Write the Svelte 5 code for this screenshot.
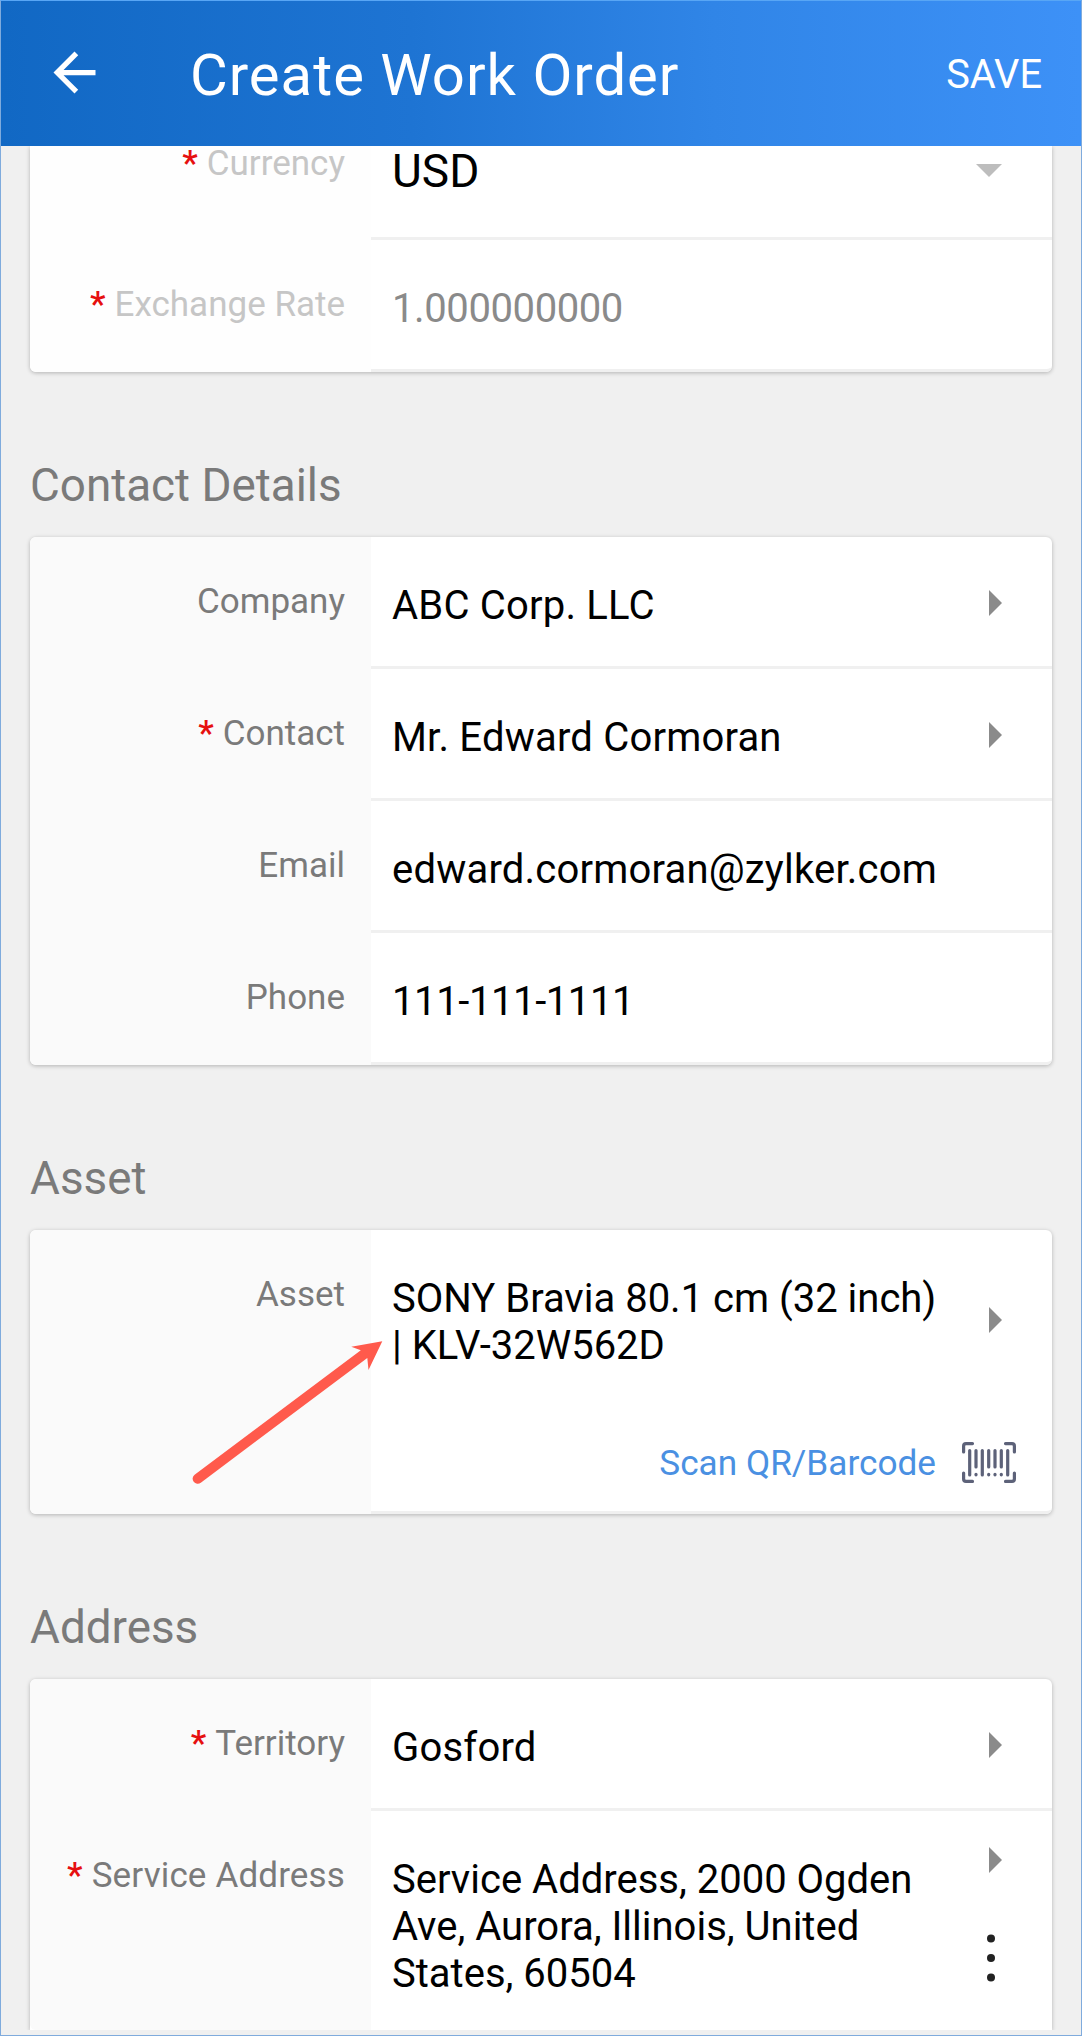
<script lang="ts">
	type Field = {
		label: string;
		value: string;
		required?: boolean;
		arrow?: "right" | "down";
		kind?: "currency" | "number" | "asset" | "address";
	};

	type Section = {
		title?: string;
		disabled?: boolean;
		fields: Field[];
	};

	const sections: Section[] = [
		{
			disabled: true,
			fields: [
				{ label: "Currency", value: "USD", required: true, arrow: "down", kind: "currency" },
				{ label: "Exchange Rate", value: "1.000000000", required: true, kind: "number" },
			],
		},
		{
			title: "Contact Details",
			fields: [
				{ label: "Company", value: "ABC Corp. LLC", arrow: "right" },
				{ label: "Contact", value: "Mr. Edward Cormoran", required: true, arrow: "right" },
				{ label: "Email", value: "edward.cormoran@zylker.com" },
				{ label: "Phone", value: "111-111-1111", kind: "number" },
			],
		},
		{
			title: "Asset",
			fields: [
				{
					label: "Asset",
					value: "SONY Bravia 80.1 cm (32 inch) | KLV-32W562D",
					arrow: "right",
					kind: "asset",
				},
			],
		},
		{
			title: "Address",
			fields: [
				{ label: "Territory", value: "Gosford", required: true, arrow: "right" },
				{
					label: "Service Address",
					value: "Service Address, 2000 Ogden Ave, Aurora, Illinois, United States, 60504",
					required: true,
					arrow: "right",
					kind: "address",
				},
			],
		},
	];
</script>

<div class="screen">
	<header>
		<button class="back" aria-label="Back">
			<svg width="63" height="63" viewBox="0 0 24 24" fill="#fff">
				<path d="M20 11H7.83l5.59-5.59L12 4l-8 8 8 8 1.41-1.41L7.83 13H20v-2z" />
			</svg>
		</button>
		<h1>Create Work Order</h1>
		<button class="save">SAVE</button>
	</header>

	<main>
		{#each sections as section}
			{#if section.title}
				<h2>{section.title}</h2>
			{/if}
			<section class="card" class:disabled={section.disabled}>
				{#each section.fields as field}
					<div class="row {field.kind ?? ''}">
						<div class="label">
							{#if field.required}<span class="star">*</span>{/if}
							<span>{field.label}</span>
						</div>
						<div class="content">
							<div class="line">
								<span class="value">{field.value}</span>
								<div class="actions">
									{#if field.arrow === "right"}
										<svg class="caret" width="13" height="26" viewBox="0 0 13 26">
											<path d="M0 0l13 13L0 26z" />
										</svg>
									{:else if field.arrow === "down"}
										<svg class="caret" width="26" height="13" viewBox="0 0 26 13">
											<path d="M0 0h26L13 13z" />
										</svg>
									{/if}
									{#if field.kind === "address"}
										<svg class="more" width="8" height="48" viewBox="0 0 8 48">
											<circle cx="4" cy="4.5" r="4" />
											<circle cx="4" cy="24" r="4" />
											<circle cx="4" cy="43.5" r="4" />
										</svg>
									{/if}
								</div>
							</div>
							{#if field.kind === "asset"}
								<div class="scan">
									<span>Scan QR/Barcode</span>
									<svg width="54" height="41" viewBox="0 0 54 41" fill="none" stroke="#5d6279" stroke-width="3.2" stroke-linecap="round">
										<path d="M1.6 10V4q0-2.400 2.400-2.400h6.500M43.500 1.600H50q2.400 0 2.400 2.400v6M52.400 31v6q0 2.400-2.400 2.400h-6.500M10.500 39.400H4q-2.400 0-2.400-2.400v-6" />
										<path d="M7.700 8.500v24.500M14 8.500v16.500M20.300 8.500v24.500M26.700 8.500v16.500M33 8.500v16.500M39.300 8.500v16.500M45.700 8.500v24.500" />
										<path d="M14 32.300v.5M26.700 32.300v.5M33 32.300v.5M39.300 32.300v.5" />
									</svg>
								</div>
							{/if}
						</div>
						{#if field.kind === "asset"}
							<svg class="pointer" width="193" height="146" viewBox="0 0 193 146" fill="#ff5a4c">
								<path d="M191.300 1.300L160.300 6.700l9.500 3.500L3.600 134.700a5 5 0 0 0 6.200 8L176.300 18l1.200 12z" />
							</svg>
						{/if}
					</div>
				{/each}
			</section>
		{/each}
	</main>
</div>

<style>
	:global(body) {
		margin: 0;
	}
	.screen {
		box-sizing: border-box;
		width: 1082px;
		height: 2036px;
		border: 1px solid #7fabdd;
		border-top-color: #58a6f5;
		background: #f0f0f0;
		font-family: Roboto, "Liberation Sans", sans-serif;
		display: flex;
		flex-direction: column;
		overflow: hidden;
	}
	header {
		flex: none;
		height: 145px;
		box-sizing: border-box;
		display: flex;
		align-items: center;
		padding: 0 39px 3px 42px;
		background: linear-gradient(90deg, #1168c4, #1e74d3 38%, #3085e7 66%, #3d91f7);
		color: #fff;
	}
	button {
		border: 0;
		padding: 0;
		background: none;
		color: inherit;
		font-family: inherit;
	}
	.back svg {
		display: block;
	}
	h1 {
		flex: 1;
		margin: 6px 0 0 84px;
		font-size: 58px;
		line-height: 68px;
		font-weight: 400;
		letter-spacing: 1px;
	}
	.save {
		font-size: 39.8px;
		line-height: 46px;
		padding-top: 6px;
	}
	main {
		flex: none;
		padding: 0 29px;
	}
	h2 {
		margin: 0;
		height: 165px;
		box-sizing: border-box;
		padding-top: 87px;
		font-size: 45.8px;
		line-height: 54px;
		font-weight: 400;
		color: #7a7a7a;
	}
	.card {
		background: #fff;
		border-radius: 6px;
		box-shadow: 0 1px 4px rgba(0, 0, 0, 0.26);
	}
	.card:first-child {
		border-radius: 0 0 6px 6px;
		clip-path: inset(0 -8px -8px);
	}
	/* last card runs on below the fold */
	.card:last-child {
		border-radius: 6px 6px 0 0;
		clip-path: inset(-8px -8px 0);
	}
	.row {
		position: relative;
		display: grid;
		grid-template-columns: 341px 1fr;
		min-height: 132px;
	}
	.label {
		display: flex;
		justify-content: flex-end;
		gap: 9px;
		padding: 45px 26px 0 0;
		background: #fafafa;
		font-size: 35px;
		line-height: 40px;
		color: #7a7a7a;
	}
	.row:first-child .label {
		border-top-left-radius: 6px;
	}
	.row:last-child .label {
		border-bottom-left-radius: 6px;
	}
	.disabled .label {
		background: #fefefe;
		color: #c6c6c6;
	}
	.star {
		color: #e60f0f;
		font-weight: 500;
	}
	.content {
		display: flex;
		flex-direction: column;
		border-bottom: 3px solid #f0f0f0;
	}
	.row:last-child .content {
		border-bottom-right-radius: 6px;
	}
	.line {
		display: flex;
		justify-content: space-between;
		padding: 45px 50px 0 21px;
		font-size: 40px;
		line-height: 47px;
		color: #000;
	}
	.value {
		max-width: 560px;
		letter-spacing: 0.2px;
	}
	.actions {
		display: flex;
		flex-direction: column;
		align-items: flex-end;
		padding-top: 8px;
	}
	.caret {
		display: block;
		fill: #8b8b8b;
	}
	.row.currency {
		min-height: 94px;
	}
	.currency .label {
		padding-top: 1px;
		line-height: 34px;
	}
	.currency .line {
		padding-top: 0;
		font-size: 46px;
		line-height: 50px;
	}
	.currency .value {
		letter-spacing: 0;
	}
	.currency .actions {
		padding-top: 18px;
	}
	.currency .caret {
		fill: #bdbdbd;
	}
	.number .value {
		letter-spacing: -0.4px;
	}
	.disabled .number .value {
		color: #8a8a8a;
	}
	.asset {
		height: 284px;
	}
	.asset .value,
	.address .value {
		letter-spacing: 0;
	}
	.asset .actions {
		padding-top: 32px;
	}
	.scan {
		display: flex;
		align-items: center;
		justify-content: flex-end;
		gap: 26px;
		margin-top: auto;
		padding: 0 36px 27px 0;
		font-size: 35.2px;
		line-height: 41px;
		color: #4a90e2;
	}
	.scan span {
		padding-top: 2px;
	}
	.scan svg {
		flex: none;
	}
	/* callout arrow, lies over both columns */
	.pointer {
		position: absolute;
		left: 161px;
		top: 110px;
	}
	.row.address {
		height: 219px;
	}
	.address .content {
		border-bottom: 0;
	}
	.address .label,
	.row.address:last-child .content {
		border-radius: 0;
	}
	.address .label {
		letter-spacing: 0.15px;
	}
	.address .actions {
		padding-top: 0;
		margin-top: -9px;
	}
	.more {
		display: block;
		fill: #222;
		margin: 61px 7px 0 0;
	}
</style>
